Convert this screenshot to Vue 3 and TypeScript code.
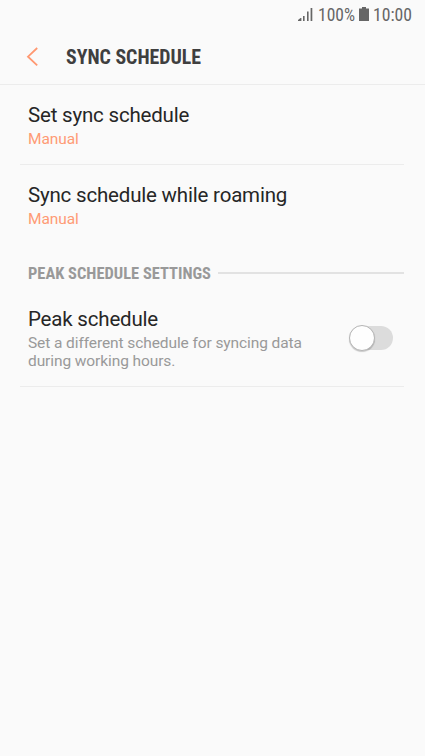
<script setup lang="ts">
import { ref } from 'vue'

interface Setting {
  title: string
  value: string
}

const settings: Setting[] = [
  { title: 'Set sync schedule', value: 'Manual' },
  { title: 'Sync schedule while roaming', value: 'Manual' },
]
const peak = ref(false)
</script>

<template>
  <main class="screen">
    <div class="status">
      <svg class="signal" width="15" height="14" viewBox="0 0 15 14">
        <path d="M0 14V13L2.5 11H3.4V14ZM5 9h1.6v5H5ZM9 4.5h1.6v9.500H9ZM12.6 1h1.7v13h-1.7Z" />
      </svg>
      <svg class="percent" width="38" height="26"><text x="0" y="18" textLength="37" lengthAdjust="spacingAndGlyphs">100%</text></svg>
      <svg class="battery" width="10" height="14" viewBox="0 0 10 14"><path d="M3 0h4v1.500h3V14H0V1.500h3Z" /></svg>
      <svg class="clock" width="41" height="26"><text x="0" y="18" textLength="39" lengthAdjust="spacingAndGlyphs">10:00</text></svg>
    </div>
    <header class="header">
      <svg class="back" width="14" height="20" viewBox="0 0 14 20"><path d="M11.2 1L2 9.700l9.200 8.700" /></svg>
      <svg class="heading" width="140" height="26"><text x="0" y="18" textLength="135" lengthAdjust="spacingAndGlyphs">SYNC SCHEDULE</text></svg>
    </header>
    <section v-for="s in settings" :key="s.title" class="item">
      <div class="title">{{ s.title }}</div>
      <div class="value">{{ s.value }}</div>
    </section>
    <div class="group">
      <svg width="184" height="22"><text x="0" y="15" textLength="183" lengthAdjust="spacingAndGlyphs">PEAK SCHEDULE SETTINGS</text></svg>
      <i class="rule"></i>
    </div>
    <section class="item peak">
      <div>
        <div class="title">Peak schedule</div>
        <div class="note">Set a different schedule for syncing data<br>during working hours.</div>
      </div>
      <button class="switch" :class="{ on: peak }" role="switch" :aria-checked="peak" @click="peak = !peak"><i class="knob"></i></button>
    </section>
  </main>
</template>

<style>
body { background: #fafafa; }
</style>

<style scoped>
.screen { box-sizing: border-box; width: 425px; height: 756px; background: #fafafa; font-family: Roboto, sans-serif; overflow: hidden; }
svg { display: block; flex: none; }
.status { display: flex; height: 30px; padding-left: 298px; align-items: flex-start; fill: #666; font-size: 18px; font-stretch: 75%; }
.signal { margin-top: 7px; }
.percent { margin: 3px 0 0 5px; }
.battery { margin: 7px 0 0 3px; }
.clock { margin: 3px 0 0 4px; }
.header { box-sizing: border-box; display: flex; height: 55px; padding: 16px 0 0 26px; border-bottom: 1px solid #ececec; }
.back { margin-top: 1px; fill: none; stroke: #ff9871; stroke-width: 1.8; }
.heading { margin-left: 26px; fill: #3f3f3f; font-size: 20.5px; font-weight: 700; font-stretch: 75%; }
.item { box-sizing: border-box; height: 80px; margin: 0 21px 0 20px; padding: 18px 0 0 8px; border-bottom: 1px solid #ececec; }
.item + .item { border-bottom-color: transparent; }
.title { height: 24px; line-height: 24px; font-size: 20.5px; letter-spacing: -.19px; color: #262626; white-space: nowrap; }
.value { margin-top: 3px; font-size: 15.5px; line-height: 18px; letter-spacing: -.09px; color: #ff9b75; }
.group { display: flex; height: 44px; margin: 0 21px 0 28px; padding-top: 19px; box-sizing: border-box; fill: #999; font-size: 16.5px; font-weight: 700; font-stretch: 75%; }
.rule { flex: 1; height: 2px; margin: 8px 0 0 6px; background: #e2e2e2; }
.peak { display: flex; justify-content: space-between; height: 98px; }
.note { margin-top: 3px; font-size: 15.5px; line-height: 18px; letter-spacing: -.09px; color: #999; white-space: nowrap; }
.switch { flex: none; width: 43px; height: 24px; margin: 19px 11px 0 0; padding: 0; border: 0; border-radius: 12px; background: #dcdcdc; }
.knob { display: block; box-sizing: border-box; width: 26px; height: 26px; margin: -1px 0 0 -1px; border: 1px solid #b5b5b5; border-radius: 50%; background: #fefefe; box-shadow: 0 1px 1px #0003; }
.on { background: #ffb598; }
.on .knob { margin-left: 18px; }
</style>
